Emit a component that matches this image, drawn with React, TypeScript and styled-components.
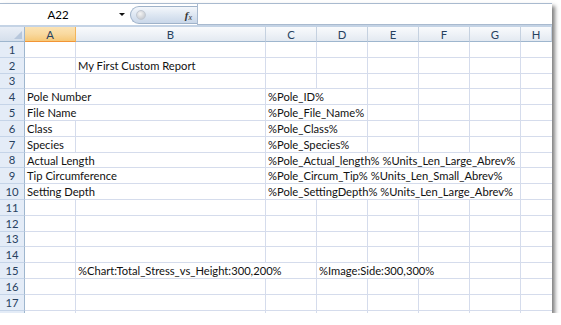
import React from "react";
import styled, { createGlobalStyle } from "styled-components";

const GlobalStyle = createGlobalStyle`
  html, body {
    margin: 0;
    padding: 0;
    background: #fff;
  }
  body {
    font-family: Lato, "Liberation Sans", sans-serif;
  }
`;

const COLUMNS = ["A", "B", "C", "D", "E", "F", "G", "H"];
const COL_TEMPLATE = "25px 51px 190px 51px 51px 51px 51px 51px 31px";
const ROW_COUNT = 17;

type CellData = { col: number; span: number; text: string };

const cellData: Record<number, CellData[]> = {
  2: [{ col: 1, span: 1, text: "My First Custom Report" }],
  4: [
    { col: 0, span: 2, text: "Pole Number" },
    { col: 2, span: 2, text: "%Pole_ID%" },
  ],
  5: [
    { col: 0, span: 2, text: "File Name" },
    { col: 2, span: 2, text: "%Pole_File_Name%" },
  ],
  6: [
    { col: 0, span: 1, text: "Class" },
    { col: 2, span: 2, text: "%Pole_Class%" },
  ],
  7: [
    { col: 0, span: 1, text: "Species" },
    { col: 2, span: 2, text: "%Pole_Species%" },
  ],
  8: [
    { col: 0, span: 2, text: "Actual Length" },
    { col: 2, span: 5, text: "%Pole_Actual_length% %Units_Len_Large_Abrev%" },
  ],
  9: [
    { col: 0, span: 2, text: "Tip Circumference" },
    { col: 2, span: 5, text: "%Pole_Circum_Tip% %Units_Len_Small_Abrev%" },
  ],
  10: [
    { col: 0, span: 2, text: "Setting Depth" },
    { col: 2, span: 5, text: "%Pole_SettingDepth% %Units_Len_Large_Abrev%" },
  ],
  15: [
    { col: 1, span: 2, text: "%Chart:Total_Stress_vs_Height:300,200%" },
    { col: 3, span: 3, text: "%Image:Side:300,300%" },
  ],
};

const buildRow = (row: number) => {
  const defined = cellData[row] || [];
  const out: CellData[] = [];
  let col = 0;
  while (col < COLUMNS.length) {
    const hit = defined.find((c) => c.col === col);
    if (hit) {
      out.push(hit);
      col += hit.span;
    } else {
      out.push({ col, span: 1, text: "" });
      col += 1;
    }
  }
  return out;
};

const App = () => {
  const rows = Array.from({ length: ROW_COUNT }, (_, i) => i + 1);

  return (
    <>
      <GlobalStyle />
      <Frame>
        <FormulaBar>
          <NameBox>
            <NameText>A22</NameText>
            <DropArrow />
          </NameBox>
          <FxPill>
            <PillDot />
            <FxLabel>
              <i>f</i>
              <sub>x</sub>
            </FxLabel>
          </FxPill>
          <FormulaInput />
        </FormulaBar>
        <BarGap />
        <Sheet>
          <HeaderRow>
            <Corner>
              <CornerTriangle />
            </Corner>
            {COLUMNS.map((c) => (
              <ColHeader key={c} $active={c === "A"}>
                {c}
              </ColHeader>
            ))}
          </HeaderRow>
          {rows.map((r) => (
            <Row key={r}>
              <RowHeader>{r}</RowHeader>
              {buildRow(r).map((cell) => (
                <Cell
                  key={cell.col}
                  $span={cell.span}
                  $last={cell.col + cell.span >= COLUMNS.length}
                >
                  {cell.text}
                </Cell>
              ))}
            </Row>
          ))}
          {/* sliver of the next row, cut by the frame */}
          <Row>
            <RowHeader />
            {COLUMNS.map((c, i) => (
              <Cell key={c} $span={1} $last={i === COLUMNS.length - 1} />
            ))}
          </Row>
        </Sheet>
      </Frame>
    </>
  );
};

const Frame = styled.div`
  margin-top: 3px;
  width: 552px;
  height: 310px;
  overflow: hidden;
  background: #fff;
  box-shadow: 3px 3px 4px rgba(0, 0, 0, 0.5);
  display: flex;
  flex-direction: column;
`;

const FormulaBar = styled.div`
  height: 22px;
  flex: none;
  display: flex;
  align-items: stretch;
  border-top: 1px solid #a9bacf;
  box-sizing: border-box;
  padding-left: 3px;
  background: #fff;
`;

const NameBox = styled.div`
  width: 124px;
  display: flex;
  align-items: center;
  position: relative;
`;

const NameText = styled.span`
  flex: 1;
  text-align: center;
  font-size: 11.5px;
  color: #000;
  padding-right: 14px;
`;

const DropArrow = styled.span`
  position: absolute;
  right: 2px;
  top: 9px;
  width: 0;
  height: 0;
  border-left: 3px solid transparent;
  border-right: 3px solid transparent;
  border-top: 3px solid #111;
`;

const FxPill = styled.div`
  width: 67px;
  margin: 2px 0 1px 3px;
  border: 1px solid #9fb2c9;
  border-right: none;
  border-radius: 10px 0 0 10px;
  background: linear-gradient(#f4f7fb, #dbe5f1 55%, #c9d7e9);
  display: flex;
  align-items: center;
  justify-content: space-between;
  padding: 0 5px;
  box-sizing: border-box;
`;

const PillDot = styled.span`
  width: 8px;
  height: 8px;
  border-radius: 50%;
  background: radial-gradient(circle at 40% 35%, #f4f4f4, #b9bec6);
  border: 1px solid #c2c9d3;
`;

const FxLabel = styled.span`
  font-family: "Liberation Serif", serif;
  font-size: 11px;
  color: #333;
  i {
    font-weight: bold;
  }
  sub {
    font-size: 8px;
    font-style: italic;
    vertical-align: -1px;
  }
`;

const FormulaInput = styled.div`
  flex: 1;
  border-left: 1px solid #a9bacf;
  border-bottom: 1px solid #a9bacf;
  background: #fff;
`;

const BarGap = styled.div`
  height: 2px;
  flex: none;
  background: #c4d3e5;
`;

const Sheet = styled.div`
  flex: 1;
  overflow: hidden;
`;

const HeaderRow = styled.div`
  display: grid;
  grid-template-columns: ${COL_TEMPLATE};
  height: 15px;
`;

const Corner = styled.div`
  background: linear-gradient(#e9eef6, #d5dfec);
  border-right: 1px solid #9eb6ce;
  border-bottom: 1px solid #9eb6ce;
  position: relative;
`;

const CornerTriangle = styled.span`
  position: absolute;
  right: 2px;
  bottom: 2px;
  width: 0;
  height: 0;
  border-left: 8px solid transparent;
  border-bottom: 8px solid #b7c7dc;
`;

const ColHeader = styled.div<{ $active?: boolean }>`
  display: flex;
  align-items: center;
  justify-content: center;
  font-size: 11.3px;
  color: #27415f;
  box-sizing: border-box;
  border-right: 1px solid ${(p) => (p.$active ? "#f2b45a" : "#c5d1e0")};
  border-bottom: 1px solid ${(p) => (p.$active ? "#f29536" : "#9eb6ce")};
  background: ${(p) =>
    p.$active
      ? "linear-gradient(#fbe3b4, #f9d99f 50%, #f6c878)"
      : "linear-gradient(#f9fafc, #eef2f7 50%, #e3e9f1)"};
`;

const Row = styled.div`
  display: grid;
  grid-template-columns: ${COL_TEMPLATE};
  height: 15.8px;
`;

const RowHeader = styled.div`
  display: flex;
  align-items: center;
  justify-content: center;
  font-size: 11.3px;
  color: #27415f;
  background: #e4ecf7;
  border-right: 1px solid #9eb6ce;
  border-bottom: 1px solid #c5d4e8;
  box-sizing: border-box;
`;

const Cell = styled.div<{ $span: number; $last?: boolean }>`
  grid-column: span ${(p) => p.$span};
  box-sizing: border-box;
  border-bottom: 1px solid #d5dcec;
  border-right: ${(p) => (p.$last ? "none" : "1px solid #d5dcec")};
  font-size: 11.2px;
  color: #111;
  white-space: nowrap;
  overflow: hidden;
  padding: 1px 0 0 2px;
  line-height: 14px;
`;

export default App;
